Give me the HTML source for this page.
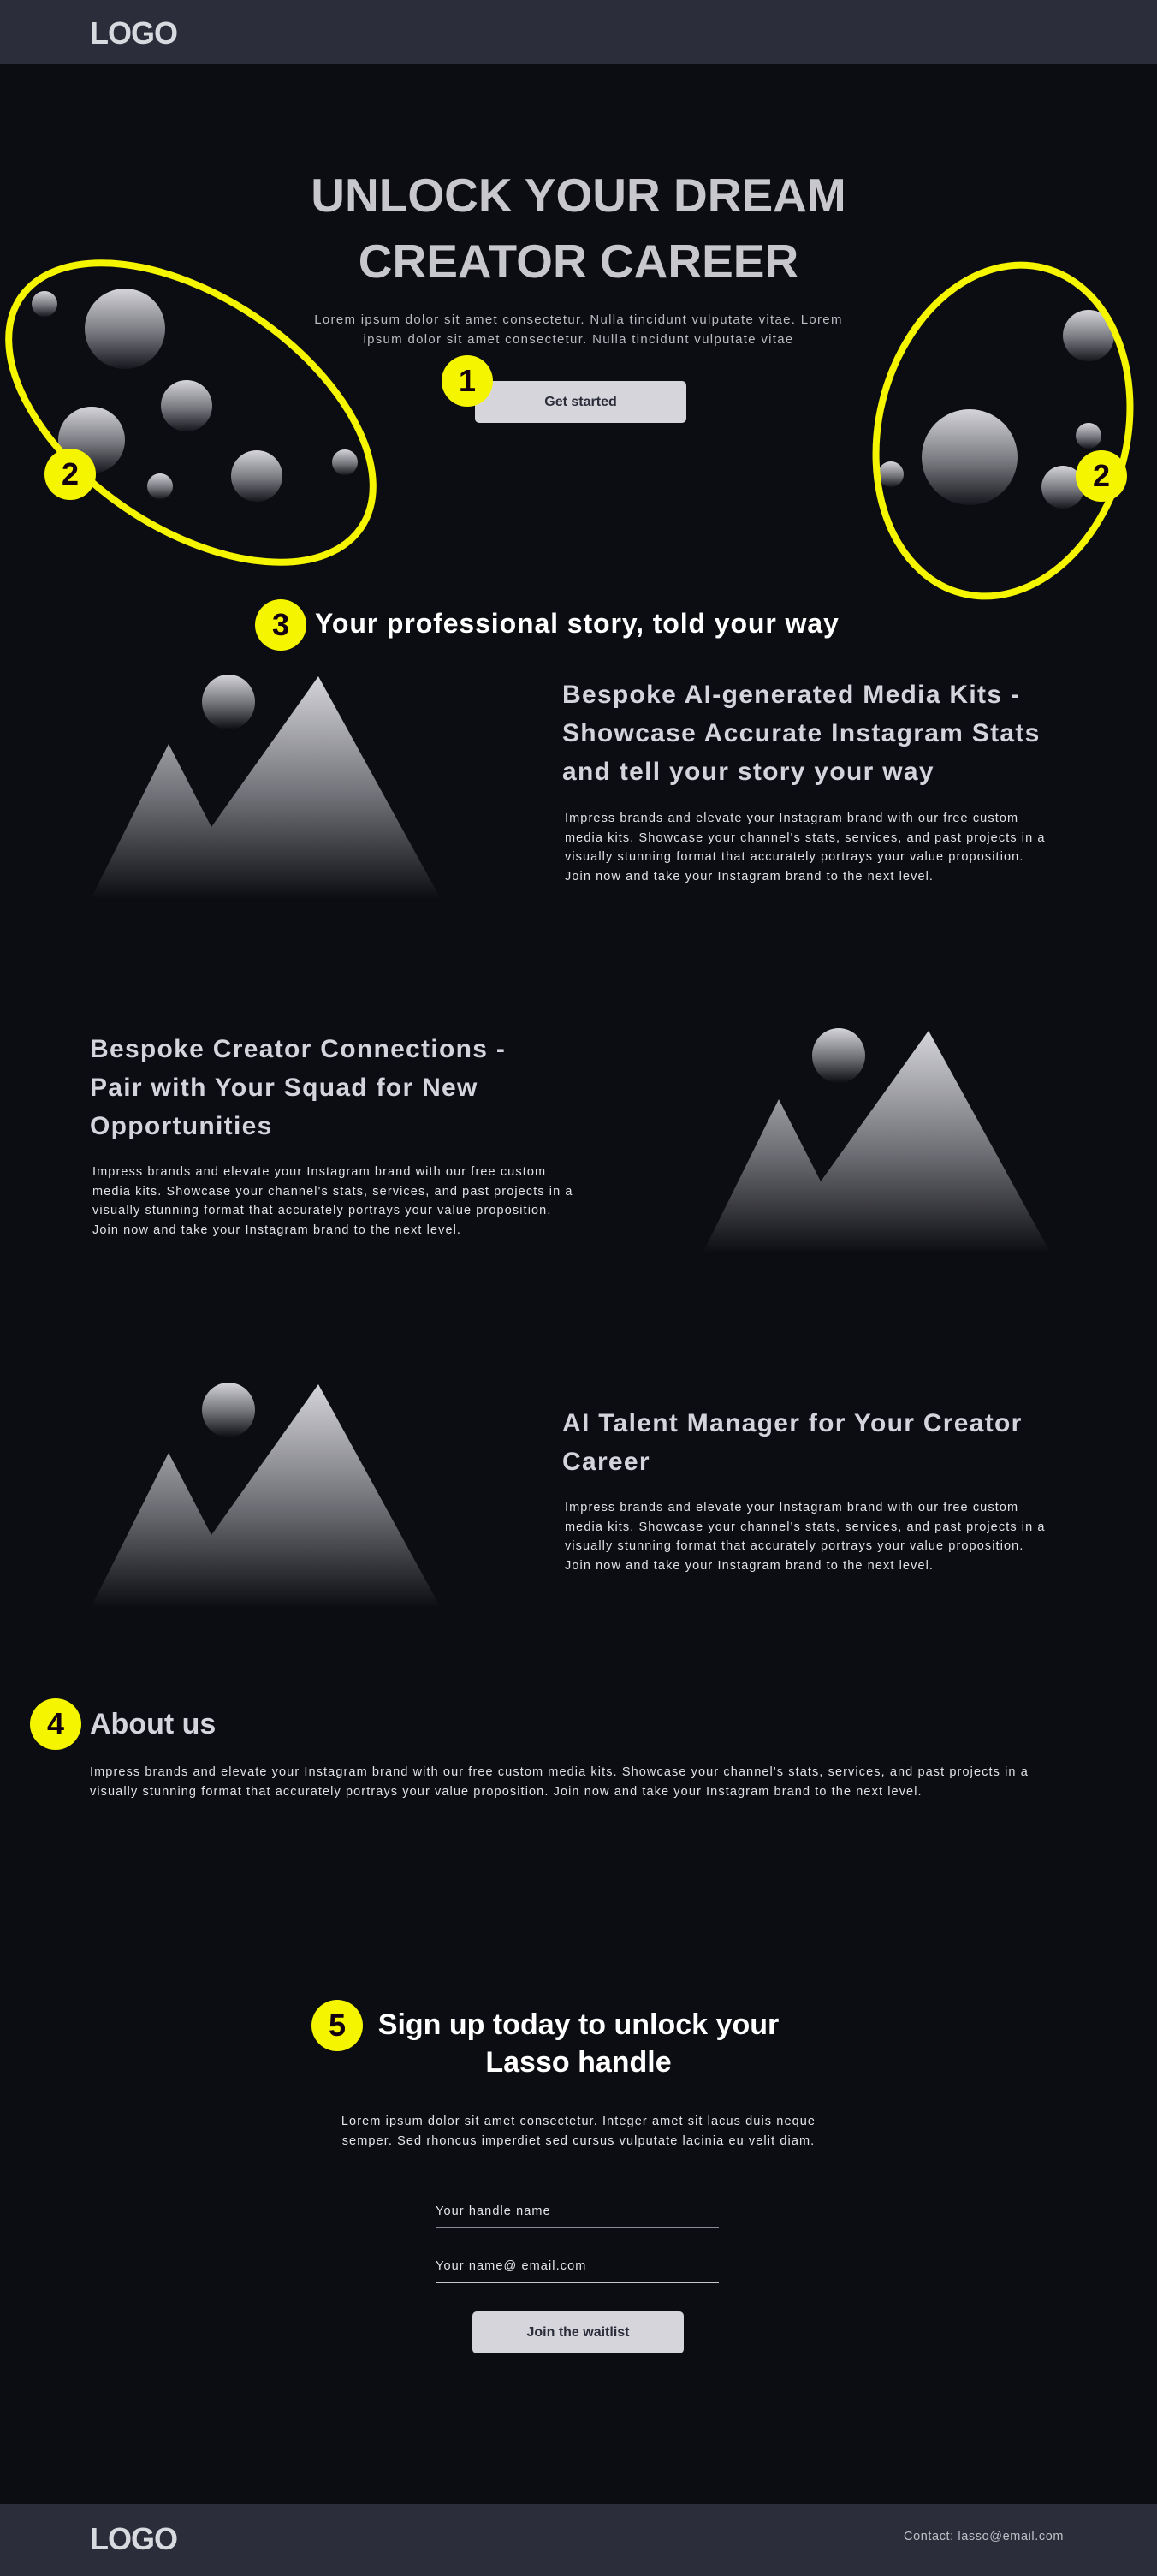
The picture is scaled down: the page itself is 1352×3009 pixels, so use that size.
<!DOCTYPE html>
<html><head><meta charset="utf-8"><style>
*{margin:0;padding:0;box-sizing:border-box}
body{width:1352px;height:3009px;background:#0c0d12;font-family:"Liberation Sans",sans-serif;position:relative;overflow:hidden;color:#ddd}
.a{position:absolute;white-space:nowrap}
.hdr{position:absolute;left:0;width:1352px;background:#2b2d3a}
.logo{font-size:36px;font-weight:bold;color:#d9d9e0;letter-spacing:-1px}
.badge{position:absolute;width:60px;height:60px;border-radius:50%;background:#f5f500;color:#120010;font-weight:bold;font-size:36px;text-align:center;line-height:60px}
.h2{font-size:30px;font-weight:bold;color:#d4d4dc;letter-spacing:1.3px;line-height:45px}
.p{font-size:14.5px;color:#e2e2e6;letter-spacing:1.1px;line-height:22.5px}
.btn{position:absolute;background:#d6d5dc;border-radius:5px;color:#2b2d3a;font-weight:bold;font-size:16px;text-align:center}
.line{position:absolute;height:2px;background:#8a8a92}
</style></head><body>
<div class="hdr" style="top:0;height:75px"></div>
<div class="a logo" style="left:105px;top:18px">LOGO</div>

<svg class="a" style="left:0;top:0" width="1352" height="720">
<defs><linearGradient id="g" x1="0" y1="0" x2="0" y2="1"><stop offset="0" stop-color="#d4d4da"/><stop offset=".55" stop-color="#77777e"/><stop offset="1" stop-color="#16171d"/></linearGradient></defs>
<g fill="url(#g)">
<circle cx="52" cy="355" r="15"/><circle cx="146" cy="384" r="47"/><circle cx="218" cy="474" r="30"/><circle cx="107" cy="514" r="39"/><circle cx="187" cy="568" r="15"/><circle cx="300" cy="556" r="30"/><circle cx="403" cy="540" r="15"/>
<circle cx="1272" cy="392" r="30"/><circle cx="1133" cy="534" r="56"/><circle cx="1272" cy="509" r="15"/><circle cx="1041" cy="554" r="15"/><circle cx="1242" cy="569" r="25"/>
</g>
<ellipse cx="223" cy="482" rx="240" ry="135" transform="rotate(34 223 482)" fill="none" stroke="#f5f500" stroke-width="8"/>
<ellipse cx="1172" cy="503" rx="145" ry="196" transform="rotate(14 1172 503)" fill="none" stroke="#f5f500" stroke-width="8"/>
</svg>
<div class="badge" style="left:52px;top:524px">2</div>
<div class="badge" style="left:1257px;top:526px">2</div>

<div class="a" style="left:0;width:1352px;top:190px;text-align:center;font-size:55px;font-weight:bold;color:#c8c8cc;line-height:77px">UNLOCK YOUR DREAM<br>CREATOR CAREER</div>
<div class="a" style="left:0;width:1352px;top:362px;text-align:center;font-size:15px;color:#bbbbc2;letter-spacing:1.3px;line-height:23px">Lorem ipsum dolor sit amet consectetur. Nulla tincidunt vulputate vitae. Lorem<br>ipsum dolor sit amet consectetur. Nulla tincidunt vulputate vitae</div>
<div class="btn" style="left:555px;top:445px;width:247px;height:49px;line-height:49px">Get started</div>
<div class="badge" style="left:516px;top:415px">1</div>

<div class="badge" style="left:298px;top:700px">3</div>
<div class="a" style="left:368px;top:710px;font-size:32px;font-weight:bold;color:#fff;letter-spacing:0.9px">Your professional story, told your way</div>

<svg class="a" style="left:0;top:0" width="1352" height="1900">
<defs><linearGradient id="m1" x1="0" y1="0" x2="0" y2="1"><stop offset="0" stop-color="#d4d4da"/><stop offset=".55" stop-color="#6e6e75"/><stop offset="1" stop-color="#0c0d12"/></linearGradient></defs>
<g fill="url(#m1)">
<ellipse cx="267" cy="820" rx="31" ry="32"/>
<polygon points="106,1050 197,869 247,966 372,790 515,1050"/>
<ellipse cx="980" cy="1233" rx="31" ry="32"/>
<polygon points="821,1464 910,1284 959,1380 1085,1204 1228,1464"/>
<ellipse cx="267" cy="1647" rx="31" ry="32"/>
<polygon points="106,1878 197,1697 247,1793 372,1617 515,1878"/>
</g></svg>

<div class="a h2" style="left:657px;top:789px">Bespoke AI-generated Media Kits -<br>Showcase Accurate Instagram Stats<br>and tell your story your way</div>
<div class="a p" style="left:660px;top:945px">Impress brands and elevate your Instagram brand with our free custom<br>media kits. Showcase your channel's stats, services, and past projects in a<br>visually stunning format that accurately portrays your value proposition.<br>Join now and take your Instagram brand to the next level.</div>

<div class="a h2" style="left:105px;top:1203px">Bespoke Creator Connections -<br>Pair with Your Squad for New<br>Opportunities</div>
<div class="a p" style="left:108px;top:1358px">Impress brands and elevate your Instagram brand with our free custom<br>media kits. Showcase your channel's stats, services, and past projects in a<br>visually stunning format that accurately portrays your value proposition.<br>Join now and take your Instagram brand to the next level.</div>

<div class="a h2" style="left:657px;top:1640px">AI Talent Manager for Your Creator<br>Career</div>
<div class="a p" style="left:660px;top:1750px">Impress brands and elevate your Instagram brand with our free custom<br>media kits. Showcase your channel's stats, services, and past projects in a<br>visually stunning format that accurately portrays your value proposition.<br>Join now and take your Instagram brand to the next level.</div>

<div class="badge" style="left:35px;top:1984px">4</div>
<div class="a" style="left:105px;top:1995px;font-size:34px;font-weight:bold;color:#d4d4dc">About us</div>
<div class="a p" style="left:105px;top:2059px">Impress brands and elevate your Instagram brand with our free custom media kits. Showcase your channel's stats, services, and past projects in a<br>visually stunning format that accurately portrays your value proposition. Join now and take your Instagram brand to the next level.</div>

<div class="badge" style="left:364px;top:2336px">5</div>
<div class="a" style="left:0;width:1352px;top:2343px;text-align:center;font-size:34px;font-weight:bold;color:#fff;line-height:44px">Sign up today to unlock your<br>Lasso handle</div>
<div class="a p" style="left:0;width:1352px;top:2467px;text-align:center;color:#e6e6ea">Lorem ipsum dolor sit amet consectetur. Integer amet sit lacus duis neque<br>semper. Sed rhoncus imperdiet sed cursus vulputate lacinia eu velit diam.</div>
<div class="a p" style="left:509px;top:2572px;color:#e6e6ea">Your handle name</div>
<div class="line" style="left:509px;top:2601px;width:331px"></div>
<div class="a p" style="left:509px;top:2636px;color:#e6e6ea">Your name@ email.com</div>
<div class="line" style="left:509px;top:2665px;width:331px;background:#c8c8cc"></div>
<div class="btn" style="left:552px;top:2700px;width:247px;height:49px;line-height:49px">Join the waitlist</div>

<div class="hdr" style="top:2925px;height:84px"></div>
<div class="a logo" style="left:105px;top:2945px">LOGO</div>
<div class="a" style="left:1056px;top:2955px;font-size:14.5px;color:#c0c0c8;letter-spacing:0.6px">Contact: lasso@email.com</div>
</body></html>
